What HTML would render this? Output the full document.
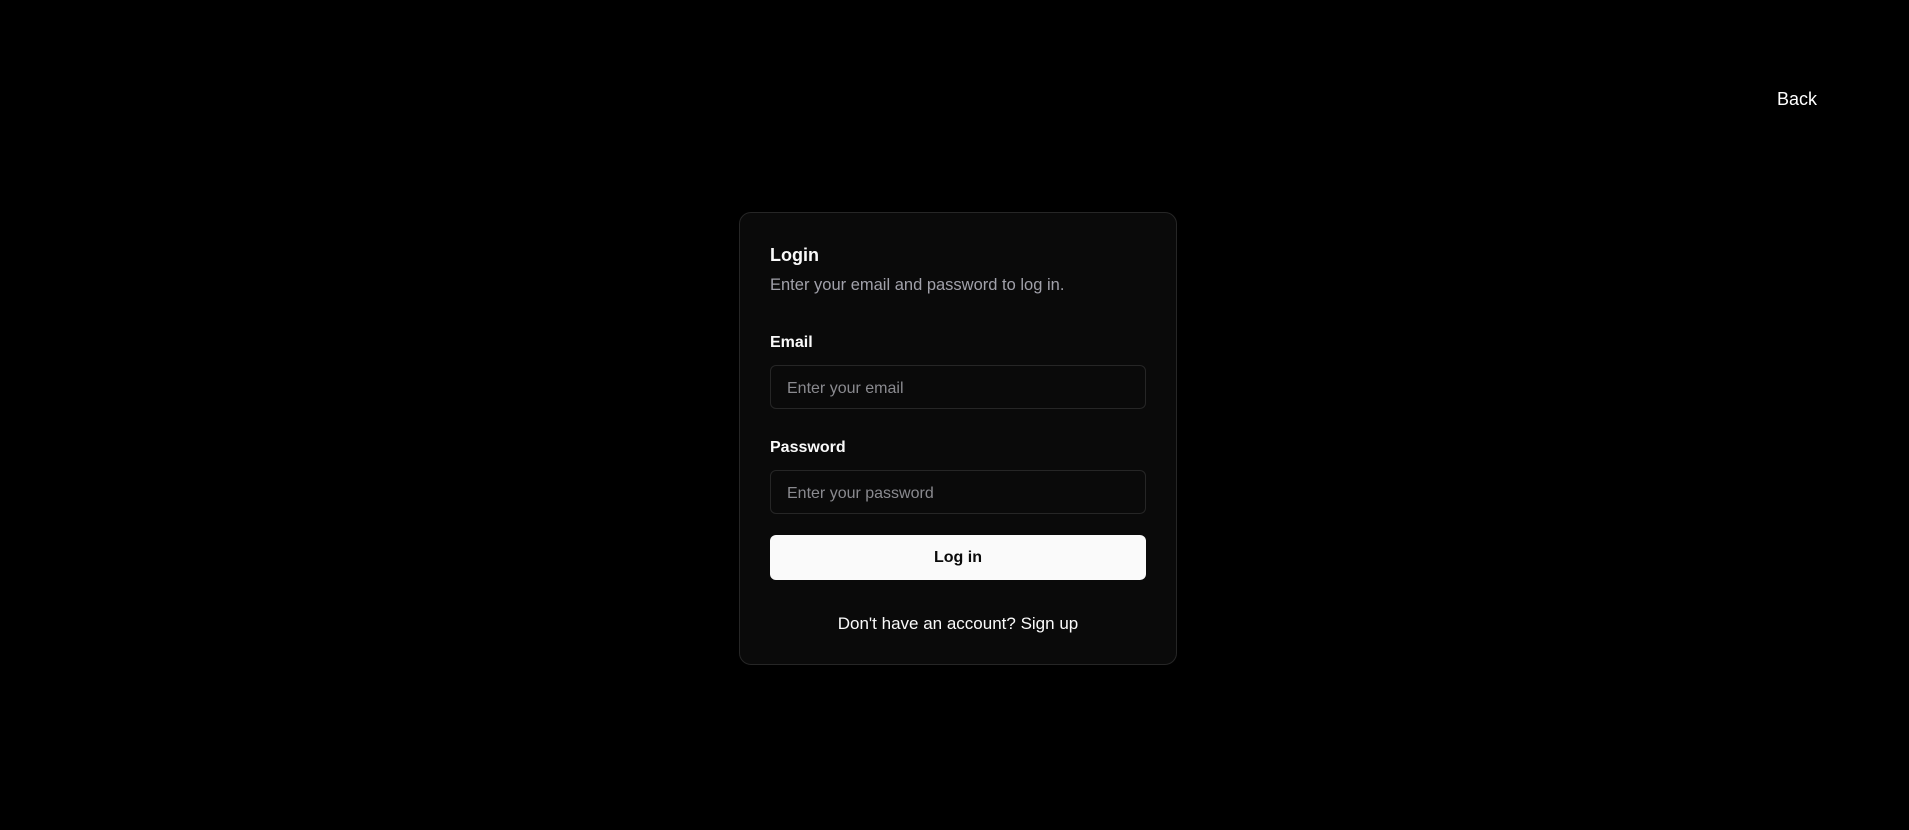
<!DOCTYPE html>
<html><head><meta charset="utf-8"><style>
*{box-sizing:border-box;margin:0;padding:0}
html,body{width:1909px;height:830px;background:#000;overflow:hidden;font-family:"Liberation Sans",sans-serif;color:#fafafa}
.back{position:absolute;left:1777px;top:89px;font-size:18px;color:#fff}
.card{position:absolute;left:739px;top:212px;width:438px;height:453px;background:#0a0a0a;border:1px solid #262626;border-radius:12px}
.t{position:absolute;left:30px;top:32px;font-size:18px;font-weight:bold}
.s{position:absolute;left:30px;top:63px;font-size:16.5px;color:#a1a1aa}
.l{position:absolute;left:30px;font-size:16px;font-weight:bold}
.in{position:absolute;left:30px;width:376px;height:44px;border:1px solid #262626;border-radius:6px;background:#0a0a0a;color:#8a8a8f;font-size:16px;padding:14px 16px}
.btn{position:absolute;left:30px;top:322px;width:376px;height:45px;background:#fafafa;border-radius:6px;color:#0a0a0a;font-size:16px;font-weight:bold;text-align:center;line-height:46px}
.su{position:absolute;left:0;width:100%;top:401px;text-align:center;font-size:17px}
</style></head><body>
<div class="back">Back</div>
<div class="card">
<div class="t">Login</div>
<div class="s">Enter your email and password to log in.</div>
<div class="l" style="top:121px">Email</div>
<div class="in" style="top:152px">Enter your email</div>
<div class="l" style="top:226px">Password</div>
<div class="in" style="top:257px">Enter your password</div>
<div class="btn">Log in</div>
<div class="su">Don't have an account? Sign up</div>
</div>
</body></html>
